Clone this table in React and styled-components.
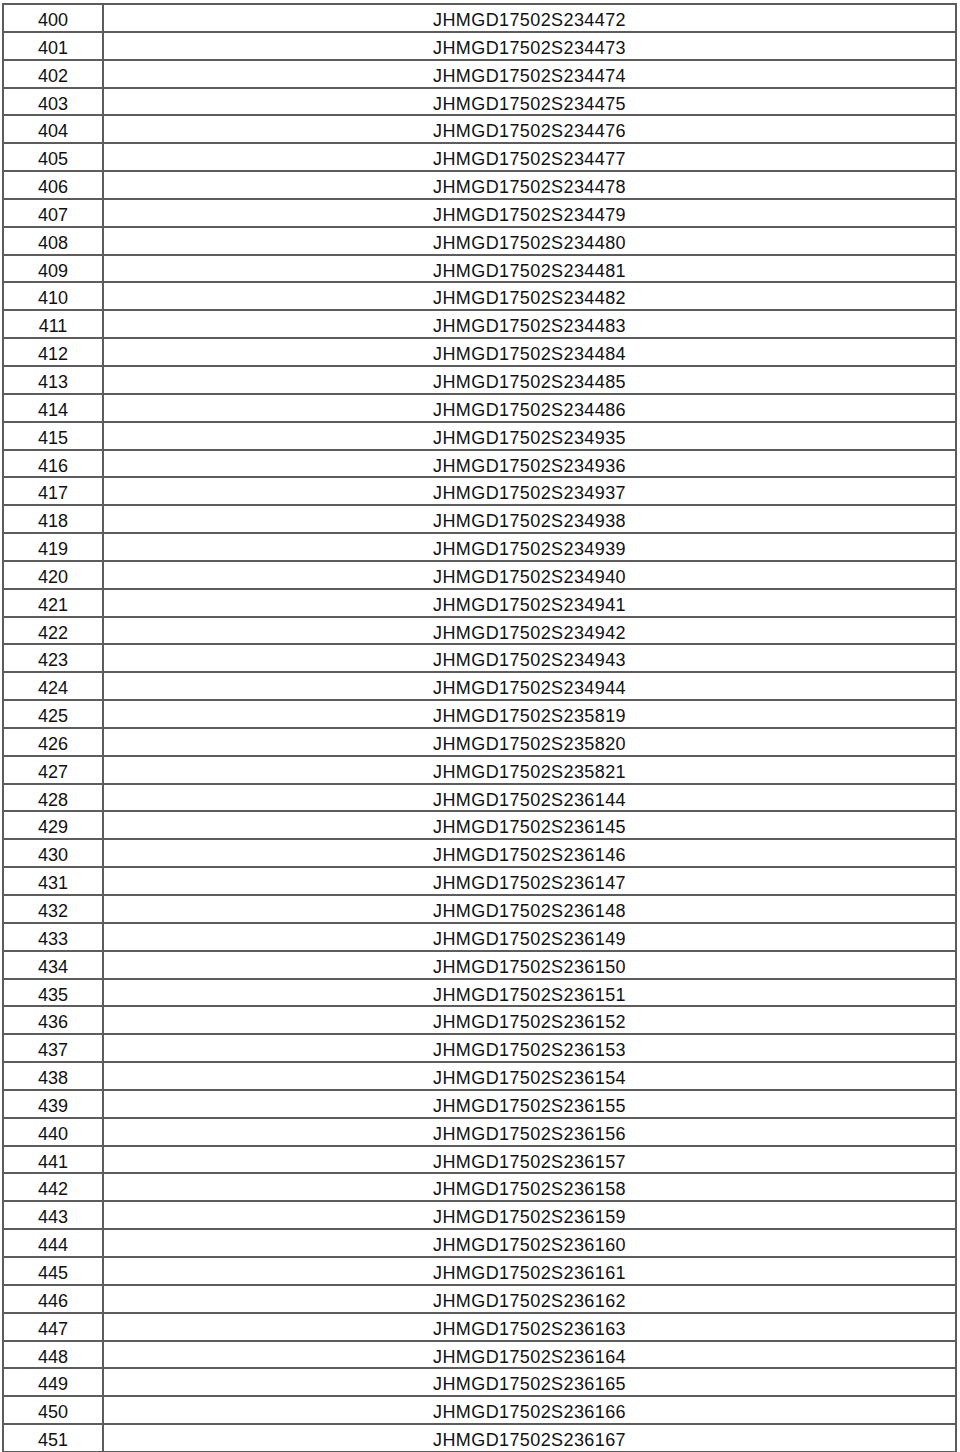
import React from 'react';
import styled, { createGlobalStyle } from 'styled-components';

const GlobalStyle = createGlobalStyle`
  html, body {
    margin: 0;
    padding: 0;
    background: #fff;
  }
  body {
    font-family: "Liberation Sans", Arial, Helvetica, sans-serif;
    color: #111;
  }
`;

// runs of consecutive numbers: [row number, serial suffix, count]
const runs = [
  [400, 234472, 15],
  [415, 234935, 10],
  [425, 235819, 3],
  [428, 236144, 24],
];

const rows = runs.flatMap(([start, serial, count]) =>
  Array.from({ length: count }, (_, i) => ({
    no: start + i,
    code: `JHMGD17502S${serial + i}`,
  })),
);

const Sheet = styled.div`
  display: grid;
  grid-template-columns: 100px 853px;
  width: max-content;
  margin: 3px 0 0 2px;
  border-top: 2px solid #5c5c5c;
  border-left: 2px solid #5c5c5c;
`;

const Cell = styled.div`
  box-sizing: border-box;
  height: 27.85px;
  padding-top: 6px;
  line-height: 19px;
  border-right: 2px solid #5c5c5c;
  border-bottom: 2px solid #5c5c5c;
  text-align: center;
  font-size: 18px;
  letter-spacing: ${props => (props.wide ? '0.4px' : '0')};
  white-space: nowrap;
`;

export default function App() {
  return (
    <>
      <GlobalStyle />
      <Sheet>
        {rows.map(row => (
          <React.Fragment key={row.no}>
            <Cell>{row.no}</Cell>
            <Cell wide>{row.code}</Cell>
          </React.Fragment>
        ))}
      </Sheet>
    </>
  );
}
